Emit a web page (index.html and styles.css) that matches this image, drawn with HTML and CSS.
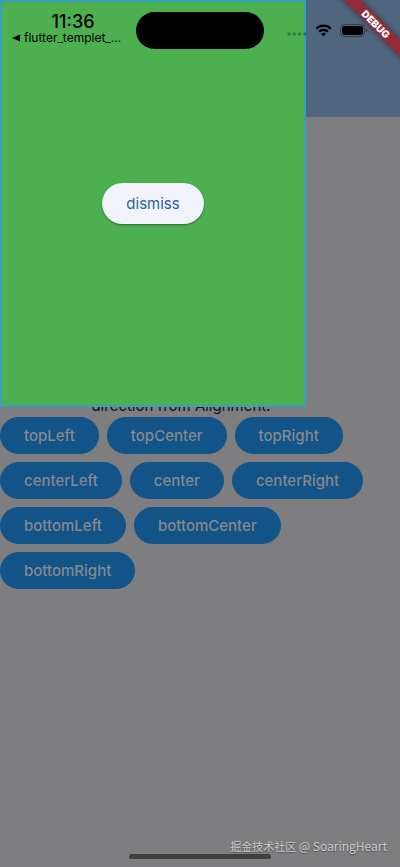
FILE: index.html
```
<!DOCTYPE html>
<html lang="en">
<head>
    <meta charset="UTF-8">
    <meta name="viewport" content="width=device-width, initial-scale=1.0">
    <title>Alignment drawer</title>
    <link rel="stylesheet" href="styles.css">
</head>
<body>
    <header class="app-bar"></header>
    <main class="content">
        <div class="options">
            <p class="hint">direction from Alignment.</p>
            <div class="button-wrap">
                <button type="button" class="btn">topLeft</button>
                <button type="button" class="btn">topCenter</button>
                <button type="button" class="btn">topRight</button>
                <button type="button" class="btn">centerLeft</button>
                <button type="button" class="btn">center</button>
                <button type="button" class="btn">centerRight</button>
                <button type="button" class="btn">bottomLeft</button>
                <button type="button" class="btn">bottomCenter</button>
                <button type="button" class="btn">bottomRight</button>
            </div>
        </div>
    </main>

    <section class="panel">
        <button type="button" class="btn-dismiss">dismiss</button>
    </section>

    <div class="status-bar">
        <div class="status-left">
            <div class="time">11:36</div>
            <div class="back">
                <svg width="8" height="8" viewBox="0 0 8 8"><path d="M8 0.5v7L0 4z"/></svg>
                <span>flutter_templet_…</span>
            </div>
        </div>
        <div class="island"></div>
        <div class="status-right">
            <svg class="signal" width="20" height="4" viewBox="0 0 20 4">
                <circle cx="2" cy="2" r="1.7"/>
                <circle cx="7.3" cy="2" r="1.7"/>
                <circle cx="12.6" cy="2" r="1.7"/>
                <circle cx="17.9" cy="2" r="1.7"/>
            </svg>
            <svg class="wifi" width="17" height="13" viewBox="0 0 17 13">
                <path d="M1.2 4.7a10.3 10.3 0 0 1 14.6 0M4 7.7a6.4 6.4 0 0 1 9 0" fill="none" stroke="#000" stroke-width="2.1"/>
                <path d="M8.5 12.4L6 9.9a3.6 3.6 0 0 1 5 0z"/>
            </svg>
            <svg class="battery" width="28" height="13" viewBox="0 0 28 13">
                <rect x="0.5" y="0.5" width="24" height="12" rx="3.8" fill="none" stroke="#000" stroke-opacity="0.4"/>
                <rect x="2" y="2" width="21" height="9" rx="2.4"/>
                <path d="M26 4.5q1.4 0.6 1.4 2t-1.4 2z" fill-opacity="0.4"/>
            </svg>
        </div>
    </div>

    <div class="debug-corner"><span class="debug-banner">DEBUG</span></div>
    <div class="home-indicator"></div>
    <div class="watermark">掘金技术社区 <span class="author">@ SoaringHeart</span></div>
</body>
</html>
```

FILE: styles.css
```
* {
    box-sizing: border-box;
}
body {
    position: relative;
    display: flex;
    flex-direction: column;
    min-height: 100vh;
    margin: 0;
    overflow: hidden;
    background-color: #7e7e80;
    font-family: Inter, "Liberation Sans", sans-serif;
}
.app-bar {
    height: 117px;
    background-color: #50677f;
}
.content {
    display: flex;
    flex: 1;
    flex-direction: column;
    justify-content: center;
    align-items: flex-start;
}
.hint {
    max-width: 362px;
    margin: 0;
    font-size: 15px;
    line-height: 22px;
    text-align: center;
    color: #111;
}
.button-wrap {
    display: flex;
    flex-wrap: wrap;
    gap: 8px;
}
.btn {
    height: 37px;
    padding: 0 24px;
    border: none;
    border-radius: 19px;
    background-color: #125388;
    color: #87898e;
    font-family: inherit;
    font-size: 15px;
    font-weight: 500;
    cursor: pointer;
}

/* drawer */
.panel {
    position: absolute;
    top: 0;
    left: 0;
    display: flex;
    align-items: center;
    justify-content: center;
    width: 76.5%;
    height: 47%;
    border: 2px solid #36a0bd;
    background-color: #4caf50;
}
.btn-dismiss {
    height: 41px;
    padding: 0 24px;
    border: none;
    border-radius: 21px;
    background-color: #f0f4fa;
    box-shadow: 0 1px 2px rgba(0, 0, 0, 0.4);
    color: #2a609e;
    font-family: inherit;
    font-size: 15px;
    cursor: pointer;
}

/* system chrome */
.status-bar {
    position: absolute;
    top: 0;
    left: 0;
    display: grid;
    grid-template-columns: 1fr 128px 1fr;
    width: 100%;
    padding-top: 12px;
}
.status-left {
    padding-left: 12px;
}
.time {
    width: 122px;
    font-size: 18px;
    font-weight: 500;
    line-height: 20px;
    text-align: center;
}
.back {
    display: flex;
    align-items: center;
    gap: 4px;
    font-size: 12px;
    line-height: 12px;
    white-space: nowrap;
}
.island {
    height: 37px;
    border-radius: 19px;
    background-color: #000;
}
.status-right {
    display: flex;
    align-items: center;
    gap: 8px;
    padding-left: 23px;
}
.signal {
    margin-top: 7px;
    opacity: 0.3;
}
.debug-corner {
    position: absolute;
    top: 0;
    right: 0;
    width: 64px;
    height: 64px;
    overflow: hidden;
}
.debug-banner {
    position: absolute;
    top: 18px;
    right: -36px;
    width: 120px;
    background-color: #942b38;
    box-shadow: 0 0 6px rgba(0, 0, 0, 0.5);
    color: #fff;
    font-size: 10px;
    font-weight: 900;
    line-height: 12px;
    text-align: center;
    transform: rotate(45deg);
}
.home-indicator {
    position: absolute;
    bottom: 8px;
    left: 50%;
    width: 142px;
    height: 5px;
    border-radius: 3px;
    background-color: #404041;
    transform: translateX(-50%);
}
.watermark {
    position: absolute;
    right: 13px;
    bottom: 12px;
    color: #cacaca;
    font-family: "Noto Sans CJK SC", sans-serif;
    font-size: 11px;
    line-height: 18px;
    text-shadow: 0 1px 1px rgba(0, 0, 0, 0.4);
}
.author {
    font-size: 12px;
}
```
